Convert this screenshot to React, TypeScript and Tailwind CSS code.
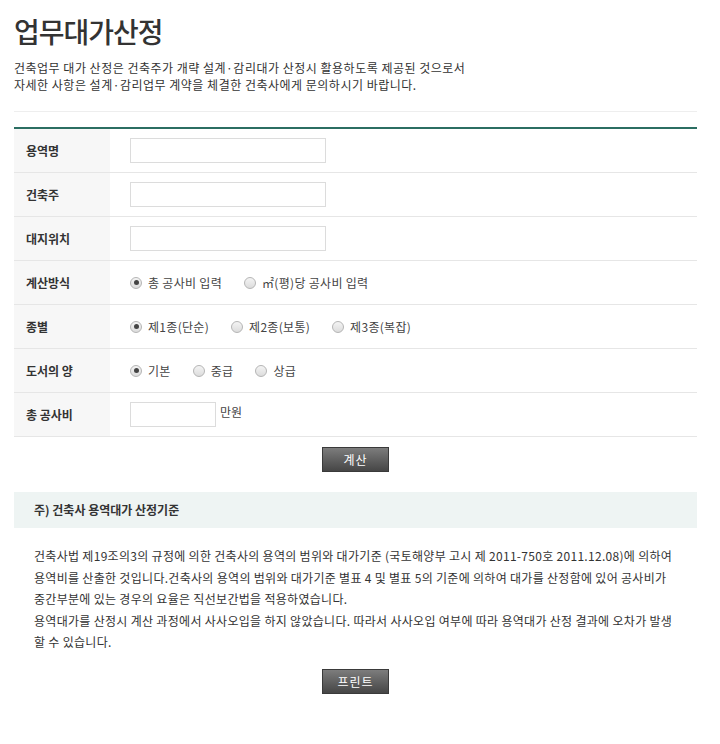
import React from "react";

function Radio({ checked, label }: { checked?: boolean; label: string }) {
  return (
    <label className="flex items-center gap-[6px] mr-[22px]">
      <span className="w-[12px] h-[12px] rounded-full border border-[#b5b5b5] bg-gradient-to-b from-[#f4f4f4] to-[#dcdcdc] flex items-center justify-center">
        {checked && <span className="w-[5px] h-[5px] rounded-full bg-[#444]" />}
      </span>
      <span className="text-[12px] text-[#444] tracking-[0.3px]">{label}</span>
    </label>
  );
}

function Row({ label, children }: { label: string; children: React.ReactNode }) {
  return (
    <div className="flex h-[44px] border-b border-[#e6e6e6]">
      <div className="w-[96px] shrink-0 bg-[#f7f7f7] pl-[12px] flex items-center text-[12px] font-bold text-[#333]">
        {label}
      </div>
      <div className="flex items-center pl-[20px]">{children}</div>
    </div>
  );
}

function Btn({ children }: { children: React.ReactNode }) {
  return (
    <button className="w-[67px] h-[25px] border border-[#3a3a3a] bg-gradient-to-b from-[#7d7d7d] to-[#464646] text-white text-[12px] leading-[23px] tracking-[1px]">
      {children}
    </button>
  );
}

export default function App() {
  return (
    <div className="w-[720px] min-h-[744px] bg-white font-['Noto_Sans_CJK_KR','Noto_Sans',sans-serif] text-[#333]">
      <div className="pl-[14px] pr-[23px]">
        <h1 className="pt-[13px] text-[28px] leading-[36px] tracking-[-1px] font-medium text-[#333]">
          업무대가산정
        </h1>
        <p className="mt-[10px] text-[12px] leading-[17px] tracking-[0.5px] text-[#333]">
          건축업무 대가 산정은 건축주가 개략 설계·감리대가 산정시 활용하도록 제공된 것으로서
          <br />
          자세한 사항은 설계·감리업무 계약을 체결한 건축사에게 문의하시기 바랍니다.
        </p>
        <div className="mt-[18px] h-px bg-[#eeeeee]" />
        <div className="mt-[15px] border-t-2 border-[#2b6e62]">
          <Row label="용역명">
            <input className="w-[196px] h-[25px] border border-[#dcdcdc] outline-none" />
          </Row>
          <Row label="건축주">
            <input className="w-[196px] h-[25px] border border-[#dcdcdc] outline-none" />
          </Row>
          <Row label="대지위치">
            <input className="w-[196px] h-[25px] border border-[#dcdcdc] outline-none" />
          </Row>
          <Row label="계산방식">
            <Radio checked label="총 공사비 입력" />
            <Radio label="㎡(평)당 공사비 입력" />
          </Row>
          <Row label="종별">
            <Radio checked label="제1종(단순)" />
            <Radio label="제2종(보통)" />
            <Radio label="제3종(복잡)" />
          </Row>
          <Row label="도서의 양">
            <Radio checked label="기본" />
            <Radio label="중급" />
            <Radio label="상급" />
          </Row>
          <Row label="총 공사비">
            <div className="flex items-start gap-[4px]">
              <input className="w-[86px] h-[25px] border border-[#dcdcdc] outline-none" />
              <span className="text-[12px] leading-[17px] text-[#444] mt-[1px]">만원</span>
            </div>
          </Row>
        </div>
        <div className="flex justify-center mt-[10px]">
          <Btn>계산</Btn>
        </div>
        <div className="mt-[20px] h-[36px] bg-[#eef4f3] pl-[20px] flex items-center text-[12px] font-bold text-[#333]">
          주) 건축사 용역대가 산정기준
        </div>
        <div className="mt-[17px] pl-[20px] text-[12px] leading-[21.5px] tracking-[0.3px] text-[#333] whitespace-nowrap">
          <p>
            건축사법 제19조의3의 규정에 의한 건축사의 용역의 범위와 대가기준 (국토해양부 고시 제 2011-750호 2011.12.08)에 의하여
            <br />
            용역비를 산출한 것입니다.건축사의 용역의 범위와 대가기준 별표 4 및 별표 5의 기준에 의하여 대가를 산정함에 있어 공사비가
            <br />
            중간부분에 있는 경우의 요율은 직선보간법을 적용하였습니다.
          </p>
          <p>
            용역대가를 산정시 계산 과정에서 사사오입을 하지 않았습니다. 따라서 사사오입 여부에 따라 용역대가 산정 결과에 오차가 발생
            <br />
            할 수 있습니다.
          </p>
        </div>
        <div className="flex justify-center mt-[16px] pb-[40px]">
          <Btn>프린트</Btn>
        </div>
      </div>
    </div>
  );
}
